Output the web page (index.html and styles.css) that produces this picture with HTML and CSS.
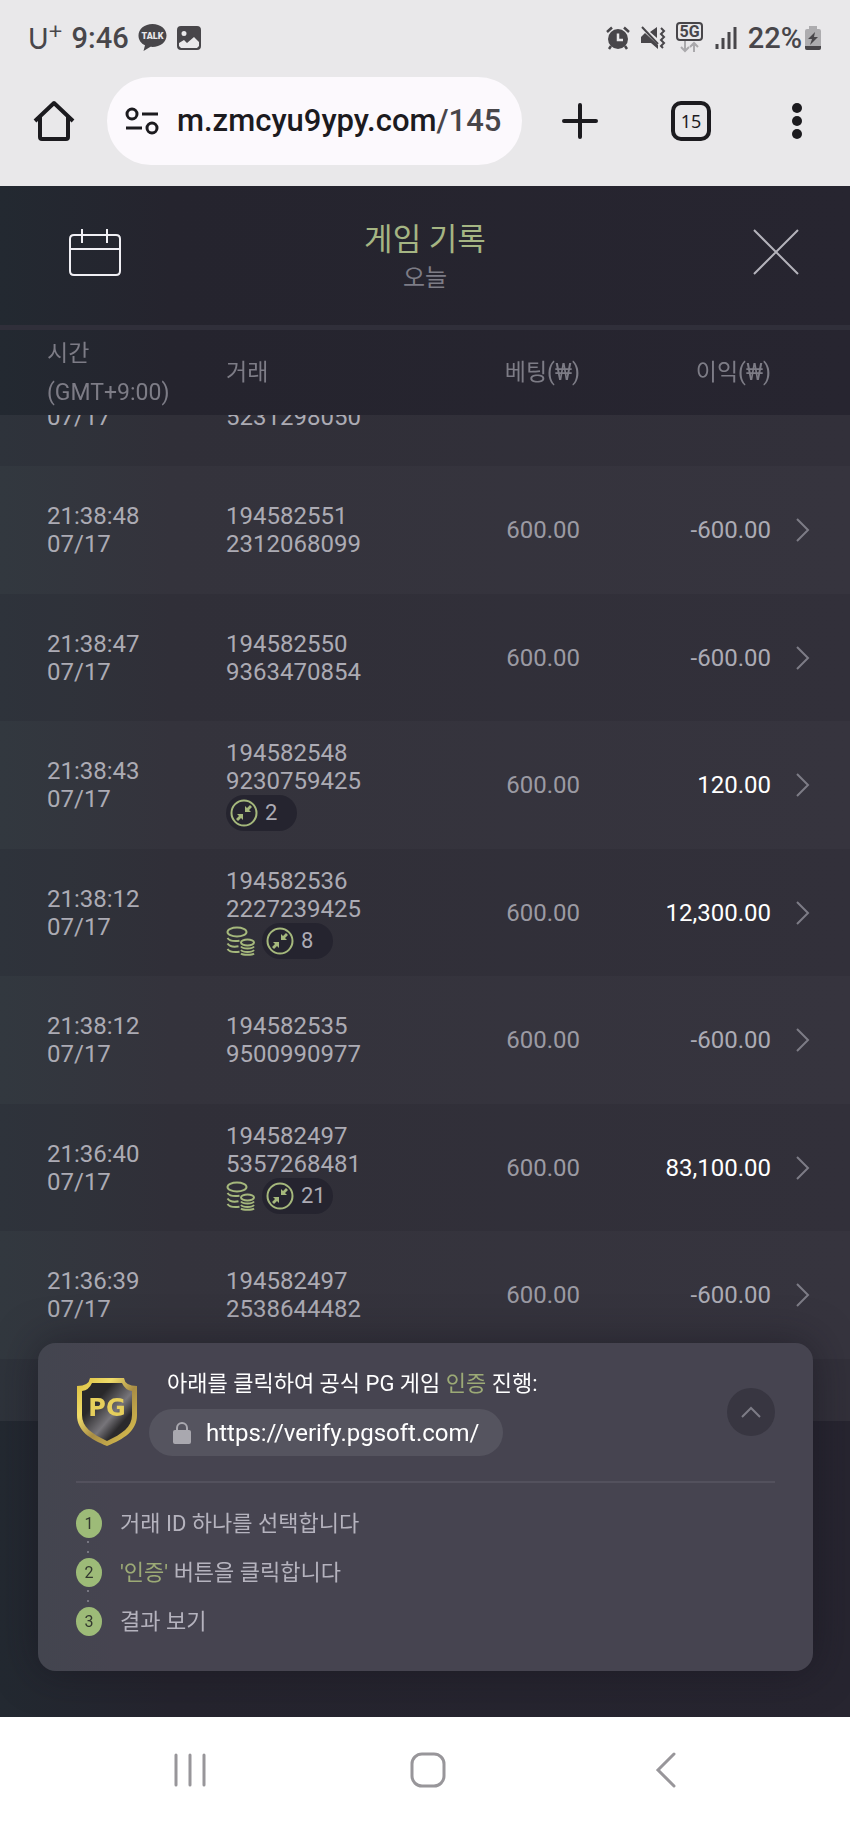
FILE: index.html
```
<!DOCTYPE html>
<html lang="ko">
<head>
    <meta charset="UTF-8" />
    <meta name="viewport" content="width=device-width, initial-scale=1" />
    <title>게임 기록</title>

    <link rel="stylesheet" href="styles.css">
</head>
<body>
    <svg class="defs" aria-hidden="true">
        <symbol id="next" viewBox="0 0 14 24">
            <path d="M1 1l11 11L1 23" fill="none" stroke="currentColor" stroke-width="2" />
        </symbol>
        <symbol id="collapse" viewBox="0 0 28 28">
            <circle cx="14" cy="14" r="12.5" fill="none" stroke="currentColor" stroke-width="2" />
            <path d="M15 13V7l2 2 3-3 2 2-3 3 2 2zM13 15v6l-2-2-3 3-2-2 3-3-2-2z" fill="currentColor" />
        </symbol>
        <symbol id="coins" viewBox="0 0 30 30">
            <g fill="none" stroke="currentColor" stroke-width="2">
                <ellipse cx="11" cy="6" rx="9.500" ry="4.500" />
                <path d="M1.500 12c2 3 7 3.500 12 2.800M1.500 17.500c2 3 7 3.500 11 2.800M1.500 23c2 3 7 3.500 12 2.800" />
                <ellipse cx="21.500" cy="16.500" rx="6.500" ry="3" />
                <path d="M15 20.500c2 2.600 11 2.600 13 0M15 24c2 2.600 11 2.600 13 0M15 27.500c2 1.800 11 1.800 13 0" />
            </g>
        </symbol>
    </svg>

    <div class="status">
        <span class="carrier">U<sup>+</sup></span>
        <span class="clock">9:46</span>
        <svg class="talk" width="29" height="28" viewBox="0 0 29 28">
            <path d="M14.500 0C6.500 0 .5 5 .5 11.500c0 4.500 2.600 8 6.500 9.800L5.500 27l7-4.200c9 .8 16-4.300 16-11.300C28.500 5 22.500 0 14.500 0z" fill="currentColor" />
            <text x="14.500" y="15" text-anchor="middle">TALK</text>
        </svg>
        <svg width="26" height="26" viewBox="0 0 26 26">
            <path fill-rule="evenodd" d="M5 1h16a4 4 0 0 1 4 4v16a4 4 0 0 1-4 4H5a4 4 0 0 1-4-4V5a4 4 0 0 1 4-4zM8 6a2.500 2.500 0 1 0 0 5 2.500 2.500 0 0 0 0-5zM3 18v3l2 2h16l2-2v-4l-5-5-7 6-3-3z" fill="currentColor" />
        </svg>
        <div class="status-right">
            <svg width="24" height="24" viewBox="0 0 24 24">
                <circle cx="12" cy="13" r="10" fill="currentColor" />
                <path d="M1 6l5-4.500M23 6l-5-4.500M5 20l-2 3M19 20l2 3" stroke="currentColor" stroke-width="2.500" />
                <path d="M12 7.500V14h5" fill="none" stroke="#e9e8ea" stroke-width="2.500" />
            </svg>
            <svg width="26" height="24" viewBox="0 0 26 24">
                <path d="M1 11l4-4 13 12v4l-7-6H1zM10 6l7-5v11z" fill="currentColor" />
                <path d="M2 1l16 17M21 2l3 3-3 3 3 3-3 3 3 3-3 3 2 2" fill="none" stroke="currentColor" stroke-width="2" />
            </svg>
            <svg class="network" width="28" height="32" viewBox="0 0 28 32">
                <rect x="1" y="1" width="25" height="17" rx="3" fill="none" stroke="currentColor" stroke-width="2" />
                <text x="13.500" y="15" text-anchor="middle">5G</text>
                <path d="M9 19v9M5 25l4 4 4-4M18 30v-9M14 25l4-4 4 4" fill="none" stroke="#aaa9ac" stroke-width="2" />
            </svg>
            <svg width="24" height="24" viewBox="0 0 24 24">
                <path d="M3 18v5M9 12v11M15 6v17M21 1v22" stroke="currentColor" stroke-width="3" />
            </svg>
            <span class="clock">22%</span>
            <svg class="battery" width="18" height="26" viewBox="0 0 18 26">
                <path d="M5 1h8v3h2a2 2 0 0 1 2 2v17a2 2 0 0 1-2 2H3a2 2 0 0 1-2-2V6a2 2 0 0 1 2-2h2z" fill="#adacaf" />
                <path d="M1 21h16v2a2 2 0 0 1-2 2H3a2 2 0 0 1-2-2zM11 7l-7 7h4l-2 6 8-8h-4z" fill="currentColor" />
            </svg>
        </div>
    </div>

    <div class="toolbar">
        <button class="home" aria-label="홈">
            <svg width="42" height="42" viewBox="0 0 42 42">
                <path d="M2 21L21 3l19 18M7 17v20q0 2 2 2h24q2 0 2-2V17" fill="none" stroke="currentColor" stroke-width="4" stroke-linejoin="round" />
            </svg>
        </button>
        <div class="address">
            <svg width="36" height="30" viewBox="0 0 36 30">
                <g fill="none" stroke="currentColor" stroke-width="3">
                    <circle cx="8" cy="8" r="5" />
                    <circle cx="28" cy="22" r="5" />
                    <path d="M18 8h16M2 22h16" />
                </g>
            </svg>
            <span>m.zmcyu9ypy.com<span class="path">/145</span></span>
        </div>
        <button class="new-tab" aria-label="새 탭">
            <svg width="36" height="36" viewBox="0 0 36 36">
                <path d="M18 2v32M2 18h32" stroke="currentColor" stroke-width="4" stroke-linecap="round" />
            </svg>
        </button>
        <button class="tool"><span class="tabs">15</span></button>
        <button class="tool" aria-label="메뉴">
            <svg width="10" height="36" viewBox="0 0 10 36">
                <g fill="currentColor"><circle cx="5" cy="5" r="5" /><circle cx="5" cy="18" r="5" /><circle cx="5" cy="31" r="5" /></g>
            </svg>
        </button>
    </div>

    <main>
        <header>
            <button aria-label="달력">
                <svg width="52" height="48" viewBox="0 0 52 48">
                    <path d="M5 7h42q4 0 4 4v32q0 4-4 4H5q-4 0-4-4V11q0-4 4-4zM1 21h50M13 1v14M38 1v14" fill="none" stroke="currentColor" stroke-width="2" />
                </svg>
            </button>
            <div class="heading">
                <h1>게임 기록</h1>
                <p>오늘</p>
            </div>
            <button class="close" aria-label="닫기">
                <svg width="46" height="46" viewBox="0 0 46 46">
                    <path d="M1 1l44 44M45 1L1 45" stroke="currentColor" stroke-width="2" />
                </svg>
            </button>
        </header>

        <div class="records" id="records">
            <table>
                <thead>
                    <tr>
                        <th class="time">시간<br>(GMT+9:00)</th>
                        <th>거래</th>
                        <th class="bet">베팅(₩)</th>
                        <th class="profit">이익(₩)</th>
                        <th class="more"></th>
                    </tr>
                </thead>
                <tbody>
                    <tr>
                        <td class="time"><br>07/17</td>
                        <td><br>5231298050</td>
                        <td class="bet"></td>
                        <td class="profit"></td>
                        <td></td>
                    </tr>
                    <tr>
                        <td class="time">21:38:48<br>07/17</td>
                        <td>194582551<br>2312068099</td>
                        <td class="bet">600.00</td>
                        <td class="profit">-600.00</td>
                        <td><button aria-label="상세"><svg width="14" height="24"><use href="#next" /></svg></button></td>
                    </tr>
                    <tr>
                        <td class="time">21:38:47<br>07/17</td>
                        <td>194582550<br>9363470854</td>
                        <td class="bet">600.00</td>
                        <td class="profit">-600.00</td>
                        <td><button aria-label="상세"><svg width="14" height="24"><use href="#next" /></svg></button></td>
                    </tr>
                    <tr>
                        <td class="time">21:38:43<br>07/17</td>
                        <td>194582548<br>9230759425
                            <div class="tags">
                                <span class="tag"><svg width="28" height="28"><use href="#collapse" /></svg>2</span>
                            </div>
                        </td>
                        <td class="bet">600.00</td>
                        <td class="profit win">120.00</td>
                        <td><button aria-label="상세"><svg width="14" height="24"><use href="#next" /></svg></button></td>
                    </tr>
                    <tr>
                        <td class="time">21:38:12<br>07/17</td>
                        <td>194582536<br>2227239425
                            <div class="tags">
                                <svg width="30" height="30"><use href="#coins" /></svg>
                                <span class="tag"><svg width="28" height="28"><use href="#collapse" /></svg>8</span>
                            </div>
                        </td>
                        <td class="bet">600.00</td>
                        <td class="profit win">12,300.00</td>
                        <td><button aria-label="상세"><svg width="14" height="24"><use href="#next" /></svg></button></td>
                    </tr>
                    <tr>
                        <td class="time">21:38:12<br>07/17</td>
                        <td>194582535<br>9500990977</td>
                        <td class="bet">600.00</td>
                        <td class="profit">-600.00</td>
                        <td><button aria-label="상세"><svg width="14" height="24"><use href="#next" /></svg></button></td>
                    </tr>
                    <tr>
                        <td class="time">21:36:40<br>07/17</td>
                        <td>194582497<br>5357268481
                            <div class="tags">
                                <svg width="30" height="30"><use href="#coins" /></svg>
                                <span class="tag"><svg width="28" height="28"><use href="#collapse" /></svg>21</span>
                            </div>
                        </td>
                        <td class="bet">600.00</td>
                        <td class="profit win">83,100.00</td>
                        <td><button aria-label="상세"><svg width="14" height="24"><use href="#next" /></svg></button></td>
                    </tr>
                    <tr>
                        <td class="time">21:36:39<br>07/17</td>
                        <td>194582497<br>2538644482</td>
                        <td class="bet">600.00</td>
                        <td class="profit">-600.00</td>
                        <td><button aria-label="상세"><svg width="14" height="24"><use href="#next" /></svg></button></td>
                    </tr>
                    <tr>
                        <td colspan="5"></td>
                    </tr>
                </tbody>
            </table>
        </div>

        <section class="verify">
            <div class="verify-top">
                <svg class="shield" width="62" height="70" viewBox="0 0 62 70">
                    <defs>
                        <linearGradient id="gold" x1="0" y1="0" x2="1" y2="1">
                            <stop offset="0" stop-color="#d9bd3c" />
                            <stop offset=".3" stop-color="#f0dc6a" />
                            <stop offset=".55" stop-color="#a98d45" />
                            <stop offset="1" stop-color="#e3ca50" />
                        </linearGradient>
                        <linearGradient id="steel" x1="0" y1="0" x2="1" y2="1">
                            <stop offset=".3" stop-color="#29282a" />
                            <stop offset=".58" stop-color="#77757a" />
                            <stop offset=".75" stop-color="#2b2a2c" />
                        </linearGradient>
                    </defs>
                    <path d="M14 1h34q1 8 13 8v29c0 16-13 24-30 31C14 62 1 54 1 38V9q12 0 13-8z" fill="url(#gold)" />
                    <path d="M16 6h30q3 7 10 8v24c0 12-10 19-25 26C16 57 6 50 6 38V14q7-1 10-8z" fill="url(#steel)" />
                    <text x="31" y="39" text-anchor="middle">PG</text>
                </svg>
                <div class="verify-text">
                    <p>아래를 클릭하여 공식 PG 게임 <em>인증</em> 진행:</p>
                    <a href="https://verify.pgsoft.com/">
                        <svg width="18" height="22" viewBox="0 0 18 22">
                            <path d="M4 10V6a5 5 0 0 1 10 0v4" fill="none" stroke="currentColor" stroke-width="2" />
                            <rect y="8" width="18" height="14" rx="2" fill="currentColor" />
                        </svg>
                        https://verify.pgsoft.com/
                    </a>
                </div>
                <button class="fold" aria-label="접기">
                    <svg width="20" height="12" viewBox="0 0 20 12">
                        <path d="M1 11l9-9 9 9" fill="none" stroke="currentColor" stroke-width="2" />
                    </svg>
                </button>
            </div>
            <ol>
                <li><span class="num">1</span>거래 ID 하나를 선택합니다</li>
                <li><span class="num">2</span><span><em>'인증'</em> 버튼을 클릭합니다</span></li>
                <li><span class="num">3</span>결과 보기</li>
            </ol>
        </section>
    </main>

    <nav>
        <button aria-label="최근 앱">
            <svg width="36" height="36" viewBox="0 0 36 36">
                <path d="M4 3v30M18 3v30M32 3v30" stroke="currentColor" stroke-width="3" stroke-linecap="round" />
            </svg>
        </button>
        <button aria-label="홈 화면">
            <svg width="36" height="36" viewBox="0 0 36 36">
                <rect x="2" y="2" width="32" height="32" rx="10" fill="none" stroke="currentColor" stroke-width="3" />
            </svg>
        </button>
        <button aria-label="뒤로">
            <svg width="36" height="36" viewBox="0 0 36 36">
                <path d="M26 2L10 18l16 16" fill="none" stroke="currentColor" stroke-width="3" stroke-linecap="round" />
            </svg>
        </button>
    </nav>

    <script>
        document.getElementById("records").scrollTop = 76;
    </script>
</body>
</html>
```
FILE: styles.css
```
body {
    margin: 0;
    height: 100vh;
    display: flex;
    flex-direction: column;
    font-family: Roboto, "Noto Sans CJK KR", sans-serif;
    font-size: 24px;
    line-height: 28px;
    background-color: #e9e8ea;
}

svg {
    display: block;
    flex: none;
}

button {
    display: flex;
    align-items: center;
    justify-content: center;
    padding: 0;
    border: 0;
    background: none;
    color: inherit;
    font: inherit;
}

h1,
p,
ol {
    margin: 0;
    padding: 0;
    font-weight: 400;
}

em {
    font-style: normal;
    color: #9caa76;
}

.defs {
    position: absolute;
    width: 0;
    height: 0;
}

/* phone status bar */
.status {
    display: flex;
    align-items: center;
    gap: 9px;
    height: 77px;
    padding: 0 28px 2px;
    box-sizing: border-box;
    color: #48464a;
}

.carrier {
    font-family: Lato, sans-serif;
    font-size: 28px;
}

.carrier sup {
    font-size: 24px;
    line-height: 0;
}

.clock {
    font-size: 29px;
    font-weight: 500;
}

.talk text {
    font-size: 9px;
    font-weight: 900;
    fill: #e9e8ea;
}

.status-right {
    display: flex;
    align-items: center;
    gap: 10px;
    margin-left: auto;
}

.network text {
    font-size: 16px;
    font-weight: 700;
    fill: currentColor;
}

.battery {
    margin-left: -8px;
}

/* browser toolbar */
.toolbar {
    display: flex;
    height: 88px;
    padding-bottom: 21px;
    color: #1c1b1f;
}

.home {
    width: 107px;
}

.address {
    flex: 1;
    display: flex;
    align-items: center;
    gap: 17px;
    padding: 0 17px;
    border-radius: 44px;
    background-color: #fcf9fd;
    font-size: 31px;
    font-weight: 500;
    line-height: 40px;
    white-space: nowrap;
    overflow: hidden;
}

.path {
    color: #48464a;
}

.new-tab {
    width: 116px;
}

.tool {
    width: 106px;
}

.tabs {
    width: 32px;
    height: 32px;
    border: 4px solid #1c1b1f;
    border-radius: 10px;
    font-family: "Noto Sans", sans-serif;
    font-size: 18px;
    line-height: 32px;
}

/* game history */
main {
    flex: 1;
    min-height: 0;
    position: relative;
    display: flex;
    flex-direction: column;
    background: linear-gradient(to right, #232931, #25242e 20%, #272530);
}

header {
    display: grid;
    grid-template-columns: 1fr auto 1fr;
    align-items: center;
    height: 139px;
    padding: 0 51px;
    box-sizing: border-box;
    color: #f0eff4;
}

.heading {
    padding-top: 5px;
    text-align: center;
}

header button {
    justify-self: start;
    padding: 0 0 8px 18px;
}

h1 {
    font-size: 31px;
    line-height: 40px;
    color: #a5b583;
}

.heading p {
    line-height: 36px;
    color: #7d7c86;
}

header .close {
    justify-self: end;
    color: #b4b3bb;
}

.records {
    flex: 1;
    min-height: 0;
    margin-bottom: 296px;
    border-top: 5px solid #302f3a;
    overflow-y: scroll;
    scrollbar-width: none;
}

table {
    width: 100%;
    table-layout: fixed;
    border-collapse: collapse;
}

th,
td {
    padding: 0;
    text-align: left;
    font-weight: 400;
}

thead {
    position: sticky;
    top: 0;
    z-index: 1;
    background: linear-gradient(to right, #232931, #25242e 20%, #272530);
}

th {
    height: 85px;
    font-size: 23px;
    line-height: 39px;
    color: #7d7c86;
}

td {
    height: 127px;
    color: #acabb4;
}

tbody tr {
    background-color: rgba(255, 255, 255, 0.05);
}

tbody tr:nth-child(even) {
    background-color: rgba(255, 255, 255, 0.07);
}

tbody tr:nth-child(even) td {
    height: 128px;
}

.time {
    width: 179px;
    padding-left: 47px;
}

.bet {
    width: 200px;
    text-align: right;
    color: #9b9aa3;
}

.profit {
    width: 191px;
    text-align: right;
}

th.bet,
th.profit {
    color: #7d7c86;
}

td.win {
    color: #fff;
}

.more {
    width: 79px;
}

td button {
    margin-left: 25px;
    color: #7d7c86;
}

.tags {
    display: flex;
    align-items: center;
    gap: 6px;
    color: #a5b87c;
}

.tag {
    display: flex;
    align-items: center;
    gap: 7px;
    width: 67px;
    height: 36px;
    padding-left: 4px;
    border-radius: 18px;
    background-color: #25242f;
    font-size: 22px;
    color: #acabb4;
}

.tag svg {
    color: #a5b87c;
}

/* verification panel lying over the list */
.verify {
    position: absolute;
    left: 38px;
    right: 37px;
    bottom: 46px;
    z-index: 2;
    padding: 25px 38px;
    border-radius: 18px;
    background: linear-gradient(to right, #43454f, #464450 10%);
    box-shadow: 0 0 40px rgba(20, 18, 28, 0.5);
    font-size: 22px;
}

.verify-top {
    display: flex;
    align-items: center;
    padding-bottom: 25px;
    border-bottom: 2px solid #53515d;
}

.shield text {
    font-family: "DejaVu Sans", sans-serif;
    font-size: 24px;
    font-weight: 700;
    fill: #e6cf5c;
}

.verify-text {
    flex: 1;
    margin-left: 11px;
    color: #fff;
}

.verify-text p {
    padding-left: 18px;
    line-height: 32px;
}

.verify-text a {
    display: inline-flex;
    align-items: center;
    gap: 15px;
    height: 47px;
    margin-top: 9px;
    padding: 0 24px;
    border-radius: 24px;
    background-color: #55545f;
    font-size: 24px;
    color: #fff;
    text-decoration: none;
}

.verify-text a svg {
    color: #a9a8af;
}

.fold {
    width: 48px;
    height: 48px;
    border-radius: 50%;
    background-color: #383641;
    color: #7d7c86;
}

ol {
    padding-top: 16px;
    list-style: none;
}

li {
    position: relative;
    display: flex;
    align-items: center;
    gap: 18px;
    height: 49px;
    color: #b5b3be;
}

.num {
    width: 26px;
    height: 29px;
    border-radius: 50%;
    background-color: #9dbb78;
    font-size: 16px;
    line-height: 29px;
    text-align: center;
    color: #33382f;
}

/* two dots between step numbers */
li + li::before {
    content: "";
    position: absolute;
    left: 11px;
    top: -7px;
    width: 2px;
    height: 8px;
    border-top: 2px solid #777681;
    border-bottom: 2px solid #777681;
}

/* phone navigation */
nav {
    display: flex;
    justify-content: space-around;
    height: 106px;
    padding: 0 65px 0 71px;
    background-color: #fff;
    color: #98969a;
}
```
